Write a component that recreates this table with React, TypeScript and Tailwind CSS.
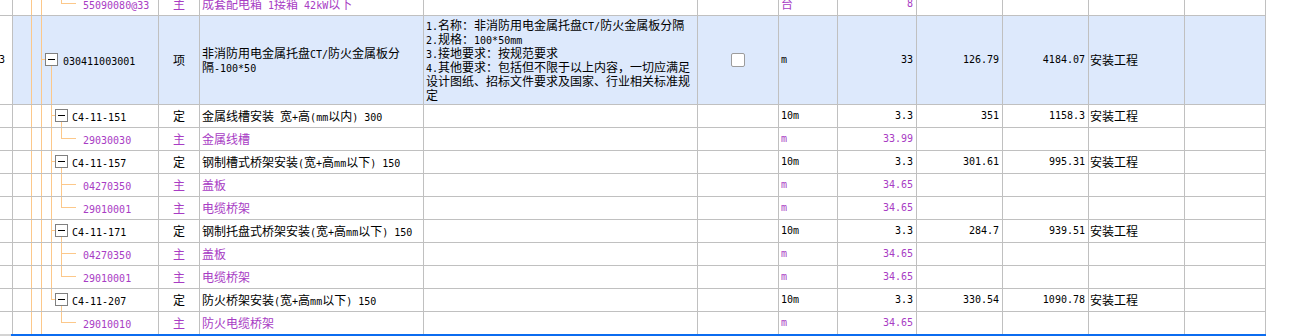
import React from 'react';

const GRID =
  'grid grid-cols-[13px_146px_41px_224px_274px_81px_59px_79px_86px_86px_96px_81px]';

const MONO = "font-['DejaVu_Sans_Mono',monospace] text-[10px] leading-[10px]";

type TreeSpec = {
  full: number[];
  elbow?: number;
  hline: [number, number];
  box?: number;
};

type Row = {
  h: number;
  mid: number;
  tree: TreeSpec;
  codePad: string;
  num?: string;
  code: string;
  type: string;
  name: string[];
  desc?: string[];
  check?: boolean;
  unit: string;
  qty: string;
  price?: string;
  total?: string;
  cat?: string;
  purple?: boolean;
  highlight?: boolean;
};

// split ascii runs out so they take the half-width mono face
function Txt({ s }: { s: string }) {
  const parts = s.split(/([\x20-\x7e]+)/).filter(Boolean);
  return (
    <>
      {parts.map((p, i) =>
        /^[\x20-\x7e]+$/.test(p) ? (
          <span key={i} className={MONO}>
            {p}
          </span>
        ) : (
          <span key={i}>{p}</span>
        )
      )}
    </>
  );
}

function Tree({ h, mid, spec }: { h: number; mid: number; spec: TreeSpec }) {
  const line = '#fcc88a';
  return (
    <svg className="absolute left-0 top-0" width={146} height={h}>
      {spec.full.map((x) => (
        <rect key={x} x={x} y={0} width={1} height={h} fill={line} />
      ))}
      {spec.elbow !== undefined && (
        <rect x={spec.elbow} y={0} width={1} height={mid + 1} fill={line} />
      )}
      <rect
        x={spec.hline[0]}
        y={mid}
        width={spec.hline[1] - spec.hline[0]}
        height={1}
        fill={line}
      />
      {spec.box !== undefined && (
        <>
          <rect x={spec.box} y={mid + 7} width={1} height={h - mid - 7} fill={line} />
          <rect x={spec.box - 6} y={mid - 6} width={13} height={13} fill="#808080" />
          <rect x={spec.box - 5} y={mid - 5} width={11} height={11} fill="#ffffff" />
          <rect x={spec.box - 3} y={mid} width={7} height={1} fill="#000000" />
        </>
      )}
    </svg>
  );
}

const defRow = (last: boolean): TreeSpec =>
  last
    ? { full: [18, 28], elbow: 38, hline: [38, 42], box: 48 }
    : { full: [18, 28, 38], hline: [38, 42], box: 48 };

const leafRow = (last: boolean, under: boolean): TreeSpec => {
  const full = under ? [18, 28, 38] : [18, 28];
  return last ? { full, elbow: 48, hline: [48, 63] } : { full: [...full, 48], hline: [48, 63] };
};

const rows: Row[] = [
  {
    h: 22, mid: 10, tree: { full: [18, 28], elbow: 48, hline: [48, 63] }, codePad: 'pl-[70px]',
    code: '55090080@33', type: '主', name: ['成套配电箱 1接箱 42kW以下'], unit: '台', qty: '8', purple: true,
  },
  {
    h: 88, mid: 43, tree: { full: [18, 28], hline: [28, 32], box: 38 }, codePad: 'pl-[50px]',
    num: '3', code: '030411003001', type: '项',
    name: ['非消防用电金属托盘CT/防火金属板分', '隔-100*50'],
    desc: [
      '1.名称：非消防用电金属托盘CT/防火金属板分隔',
      '2.规格：100*50mm',
      '3.接地要求：按规范要求',
      '4.其他要求：包括但不限于以上内容，一切应满足',
      '设计图纸、招标文件要求及国家、行业相关标准规',
      '定',
    ],
    check: true, unit: 'm', qty: '33', price: '126.79', total: '4184.07', cat: '安装工程', highlight: true,
  },
  {
    h: 22, mid: 10, tree: defRow(false), codePad: 'pl-[59px]',
    code: 'C4-11-151', type: '定', name: ['金属线槽安装 宽+高(mm以内) 300'],
    unit: '10m', qty: '3.3', price: '351', total: '1158.3', cat: '安装工程',
  },
  {
    h: 22, mid: 10, tree: leafRow(true, true), codePad: 'pl-[70px]',
    code: '29030030', type: '主', name: ['金属线槽'], unit: 'm', qty: '33.99', purple: true,
  },
  {
    h: 22, mid: 10, tree: defRow(false), codePad: 'pl-[59px]',
    code: 'C4-11-157', type: '定', name: ['钢制槽式桥架安装(宽+高mm以下) 150'],
    unit: '10m', qty: '3.3', price: '301.61', total: '995.31', cat: '安装工程',
  },
  {
    h: 22, mid: 10, tree: leafRow(false, true), codePad: 'pl-[70px]',
    code: '04270350', type: '主', name: ['盖板'], unit: 'm', qty: '34.65', purple: true,
  },
  {
    h: 22, mid: 10, tree: leafRow(true, true), codePad: 'pl-[70px]',
    code: '29010001', type: '主', name: ['电缆桥架'], unit: 'm', qty: '34.65', purple: true,
  },
  {
    h: 22, mid: 10, tree: defRow(false), codePad: 'pl-[59px]',
    code: 'C4-11-171', type: '定', name: ['钢制托盘式桥架安装(宽+高mm以下) 150'],
    unit: '10m', qty: '3.3', price: '284.7', total: '939.51', cat: '安装工程',
  },
  {
    h: 22, mid: 10, tree: leafRow(false, true), codePad: 'pl-[70px]',
    code: '04270350', type: '主', name: ['盖板'], unit: 'm', qty: '34.65', purple: true,
  },
  {
    h: 22, mid: 10, tree: leafRow(true, true), codePad: 'pl-[70px]',
    code: '29010001', type: '主', name: ['电缆桥架'], unit: 'm', qty: '34.65', purple: true,
  },
  {
    h: 22, mid: 10, tree: defRow(true), codePad: 'pl-[59px]',
    code: 'C4-11-207', type: '定', name: ['防火桥架安装(宽+高mm以下) 150'],
    unit: '10m', qty: '3.3', price: '330.54', total: '1090.78', cat: '安装工程',
  },
  {
    h: 22, mid: 10, tree: leafRow(true, false), codePad: 'pl-[70px]',
    code: '29010010', type: '主', name: ['防火电缆桥架'], unit: 'm', qty: '34.65', purple: true,
  },
];

function GridRow({ row, last }: { row: Row; last: boolean }) {
  const b = last ? 'border-r border-[#c0c0c0]' : 'border-r border-b border-[#c0c0c0]';
  const bg = row.highlight ? 'bg-[#dde9fc]' : 'bg-white';
  const tone = row.purple ? 'text-[#a83cc4]' : 'text-black';
  const cell = `${b} ${bg} flex items-center overflow-hidden whitespace-nowrap`;
  const height = row.h === 88 ? 'h-[89px]' : last ? 'h-[22px]' : 'h-[23px]';

  return (
    <div className={`${GRID} ${height}`}>
      <div className={`${b} bg-white flex items-center overflow-hidden`}>
        {row.num && <span className={`${MONO} -ml-[1px]`}>{row.num}</span>}
      </div>
      <div className={`${cell} relative ${row.codePad} ${tone}`}>
        <Tree h={row.h} mid={row.mid} spec={row.tree} />
        <span className="relative">
          <Txt s={row.code} />
        </span>
      </div>
      <div className={`${cell} justify-center ${tone}`}>{row.type}</div>
      <div className={`${cell} pl-[2px] ${tone}`}>
        <div>
          {row.name.map((l, i) => (
            <div key={i} className="h-[14px]">
              <Txt s={l} />
            </div>
          ))}
        </div>
      </div>
      <div className={`${cell} pl-[2px]`}>
        {row.desc && (
          <div>
            {row.desc.map((l, i) => (
              <div key={i} className="h-[14px]">
                <Txt s={l} />
              </div>
            ))}
          </div>
        )}
      </div>
      <div className={`${cell} justify-center`}>
        {row.check && (
          <div className="w-[14px] h-[14px] rounded-[2px] border border-[#9c9c9c] bg-white" />
        )}
      </div>
      <div className={`${cell} pl-[2px] ${tone}`}>
        <Txt s={row.unit} />
      </div>
      <div className={`${cell} justify-end pr-[3px] ${tone}`}>
        <span className={MONO}>{row.qty}</span>
      </div>
      <div className={`${cell} justify-end pr-[3px]`}>
        {row.price && <span className={MONO}>{row.price}</span>}
      </div>
      <div className={`${cell} justify-end pr-[3px]`}>
        {row.total && <span className={MONO}>{row.total}</span>}
      </div>
      <div className={`${cell} pl-[1px]`}>{row.cat}</div>
      <div className={cell} />
    </div>
  );
}

export default function App() {
  return (
    <div className="h-[336px] w-[1303px] overflow-hidden bg-white text-black font-['Noto_Sans_CJK_SC',sans-serif] text-[12px] leading-[14px]">
      <div className="-mt-[7px]">
        {rows.map((r, i) => (
          <GridRow key={i} row={r} last={i === rows.length - 1} />
        ))}
      </div>
      <div className="flex h-[2px]">
        <div className="w-[11px] bg-[#d4d4d4]" />
        <div className="w-[1255px] bg-[#0b6cf0]" />
      </div>
    </div>
  );
}
